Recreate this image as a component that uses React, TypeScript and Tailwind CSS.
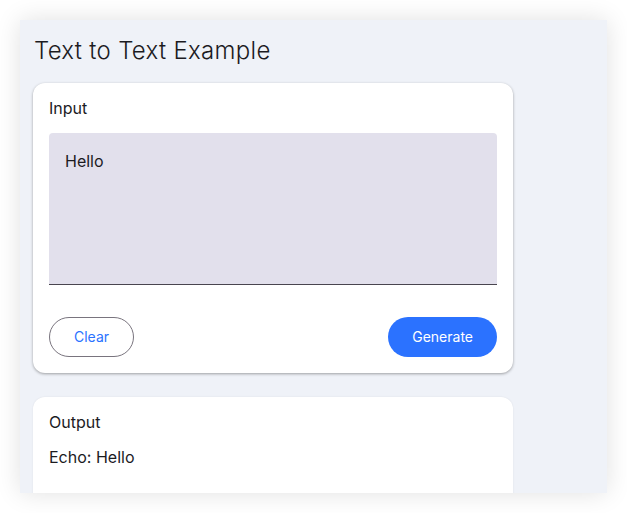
export default function App() {
  return (
    <div className="min-h-screen bg-white p-5 font-['Inter',sans-serif] text-[#1c1b1f]">
      <div className="h-[473px] w-[587px] overflow-hidden bg-[#eff2f8] px-[13px] pt-[15px] shadow-[0_0_24px_rgba(0,0,0,0.12)]">
        <h1 className="mb-[16px] ml-[1px] text-2xl leading-8 font-light tracking-[0.3px]">
          Text to Text Example
        </h1>

        <div className="w-[480px] rounded-xl bg-white px-4 pt-[13px] pb-4 shadow-[0_1px_3px_rgba(0,0,0,0.35)]">
          <div className="text-base leading-6">Input</div>
          <div className="mt-[13px] h-[152px] rounded-t border-b border-[#49454f] bg-[#e2e0ec] p-4 text-base leading-6">
            Hello
          </div>
          <div className="mt-8 flex items-center justify-between">
            <button
              type="button"
              className="h-10 rounded-full border border-[#79747e] px-6 text-sm text-[#2b72ff]"
            >
              Clear
            </button>
            <button
              type="button"
              className="h-10 rounded-full bg-[#2b72ff] px-6 text-sm text-white"
            >
              Generate
            </button>
          </div>
        </div>

        <div className="mt-6 h-[120px] w-[480px] rounded-xl bg-white px-4 pt-[13px] shadow-[0_0_2px_rgba(0,0,0,0.08)]">
          <div className="text-base leading-6">Output</div>
          <div className="mt-[11px] text-base leading-6">Echo: Hello</div>
        </div>
      </div>
    </div>
  );
}
